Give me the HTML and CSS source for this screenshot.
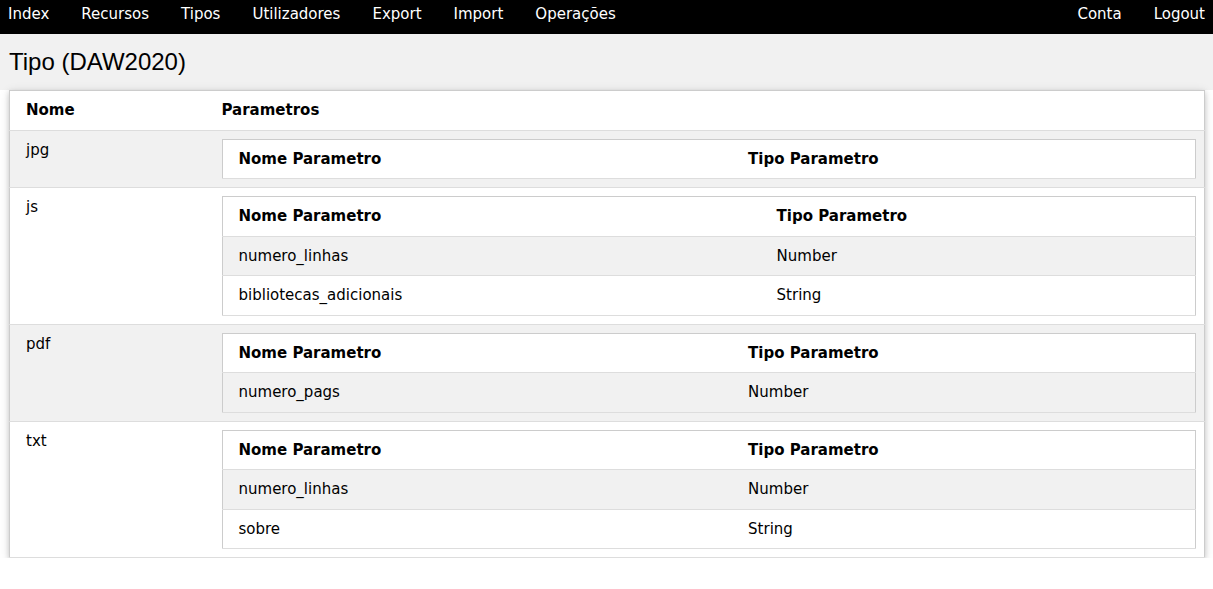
FILE: index.html
```html
<!DOCTYPE html>
<html lang="pt">
<head>
<meta charset="utf-8">
<title>Tipo (DAW2020)</title>
<link rel="stylesheet" href="styles.css">
</head>
<body>
<nav class="topbar">
  <div class="nav-group">
    <a href="#">Index</a>
    <a href="#">Recursos</a>
    <a href="#">Tipos</a>
    <a href="#">Utilizadores</a>
    <a href="#">Export</a>
    <a href="#">Import</a>
    <a href="#">Operações</a>
  </div>
  <div class="nav-group">
    <a href="#">Conta</a>
    <a href="#">Logout</a>
  </div>
</nav>
<header class="page-head">
  <h3>Tipo (DAW2020)</h3>
</header>
<table class="grid types">
  <tr><th>Nome</th><th>Parametros</th></tr>
  <tr>
    <td>jpg</td>
    <td>
      <table class="grid params">
        <tr><th>Nome Parametro</th><th>Tipo Parametro</th></tr>
      </table>
    </td>
  </tr>
  <tr>
    <td>js</td>
    <td>
      <table class="grid params">
        <tr><th>Nome Parametro</th><th>Tipo Parametro</th></tr>
        <tr><td>numero_linhas</td><td>Number</td></tr>
        <tr><td>bibliotecas_adicionais</td><td>String</td></tr>
      </table>
    </td>
  </tr>
  <tr>
    <td>pdf</td>
    <td>
      <table class="grid params">
        <tr><th>Nome Parametro</th><th>Tipo Parametro</th></tr>
        <tr><td>numero_pags</td><td>Number</td></tr>
      </table>
    </td>
  </tr>
  <tr>
    <td>txt</td>
    <td>
      <table class="grid params">
        <tr><th>Nome Parametro</th><th>Tipo Parametro</th></tr>
        <tr><td>numero_linhas</td><td>Number</td></tr>
        <tr><td>sobre</td><td>String</td></tr>
      </table>
    </td>
  </tr>
</table>
</body>
</html>
```
FILE: styles.css
```css
html { box-sizing: border-box; }
*, *::before, *::after { box-sizing: inherit; }

body {
  margin: 0;
  font-family: "DejaVu Sans", Verdana, sans-serif;
  font-size: 15px;
  line-height: 1.5;
  color: #000;
  background: #fff;
}

.topbar {
  display: flex;
  justify-content: space-between;
  height: 34px;
  background: #000;
  color: #fff;
}

.nav-group {
  display: flex;
  gap: 16px;
}

.nav-group a {
  color: #fff;
  text-decoration: none;
  padding: 2.5px 8px 0;
}

.page-head {
  background: #f1f1f1;
  padding: 10px 9px;
}

.page-head h3 {
  margin: 0;
  font-family: "Liberation Sans", Arial, sans-serif;
  font-weight: 400;
  font-size: 24px;
  line-height: 36px;
}

.grid {
  border-collapse: collapse;
  border-spacing: 0;
  border: 1px solid #ccc;
}

.grid > tbody > tr {
  border-bottom: 1px solid #ddd;
  background: #fff;
}

.grid > tbody > tr:nth-child(even) {
  background: #f1f1f1;
}

.grid > tbody > tr > th,
.grid > tbody > tr > td {
  padding: 8px;
  text-align: left;
  vertical-align: top;
}

.grid > tbody > tr > th:first-child,
.grid > tbody > tr > td:first-child {
  padding-left: 16px;
}

.types {
  width: calc(100% - 17px);
  margin: 0 8px 0 9px;
  box-shadow: 0 2px 5px 0 rgba(0, 0, 0, 0.16), 0 2px 10px 0 rgba(0, 0, 0, 0.12);
}

.types > tbody > tr > th:first-child {
  width: 204px;
}

.params {
  width: 100%;
}
```
